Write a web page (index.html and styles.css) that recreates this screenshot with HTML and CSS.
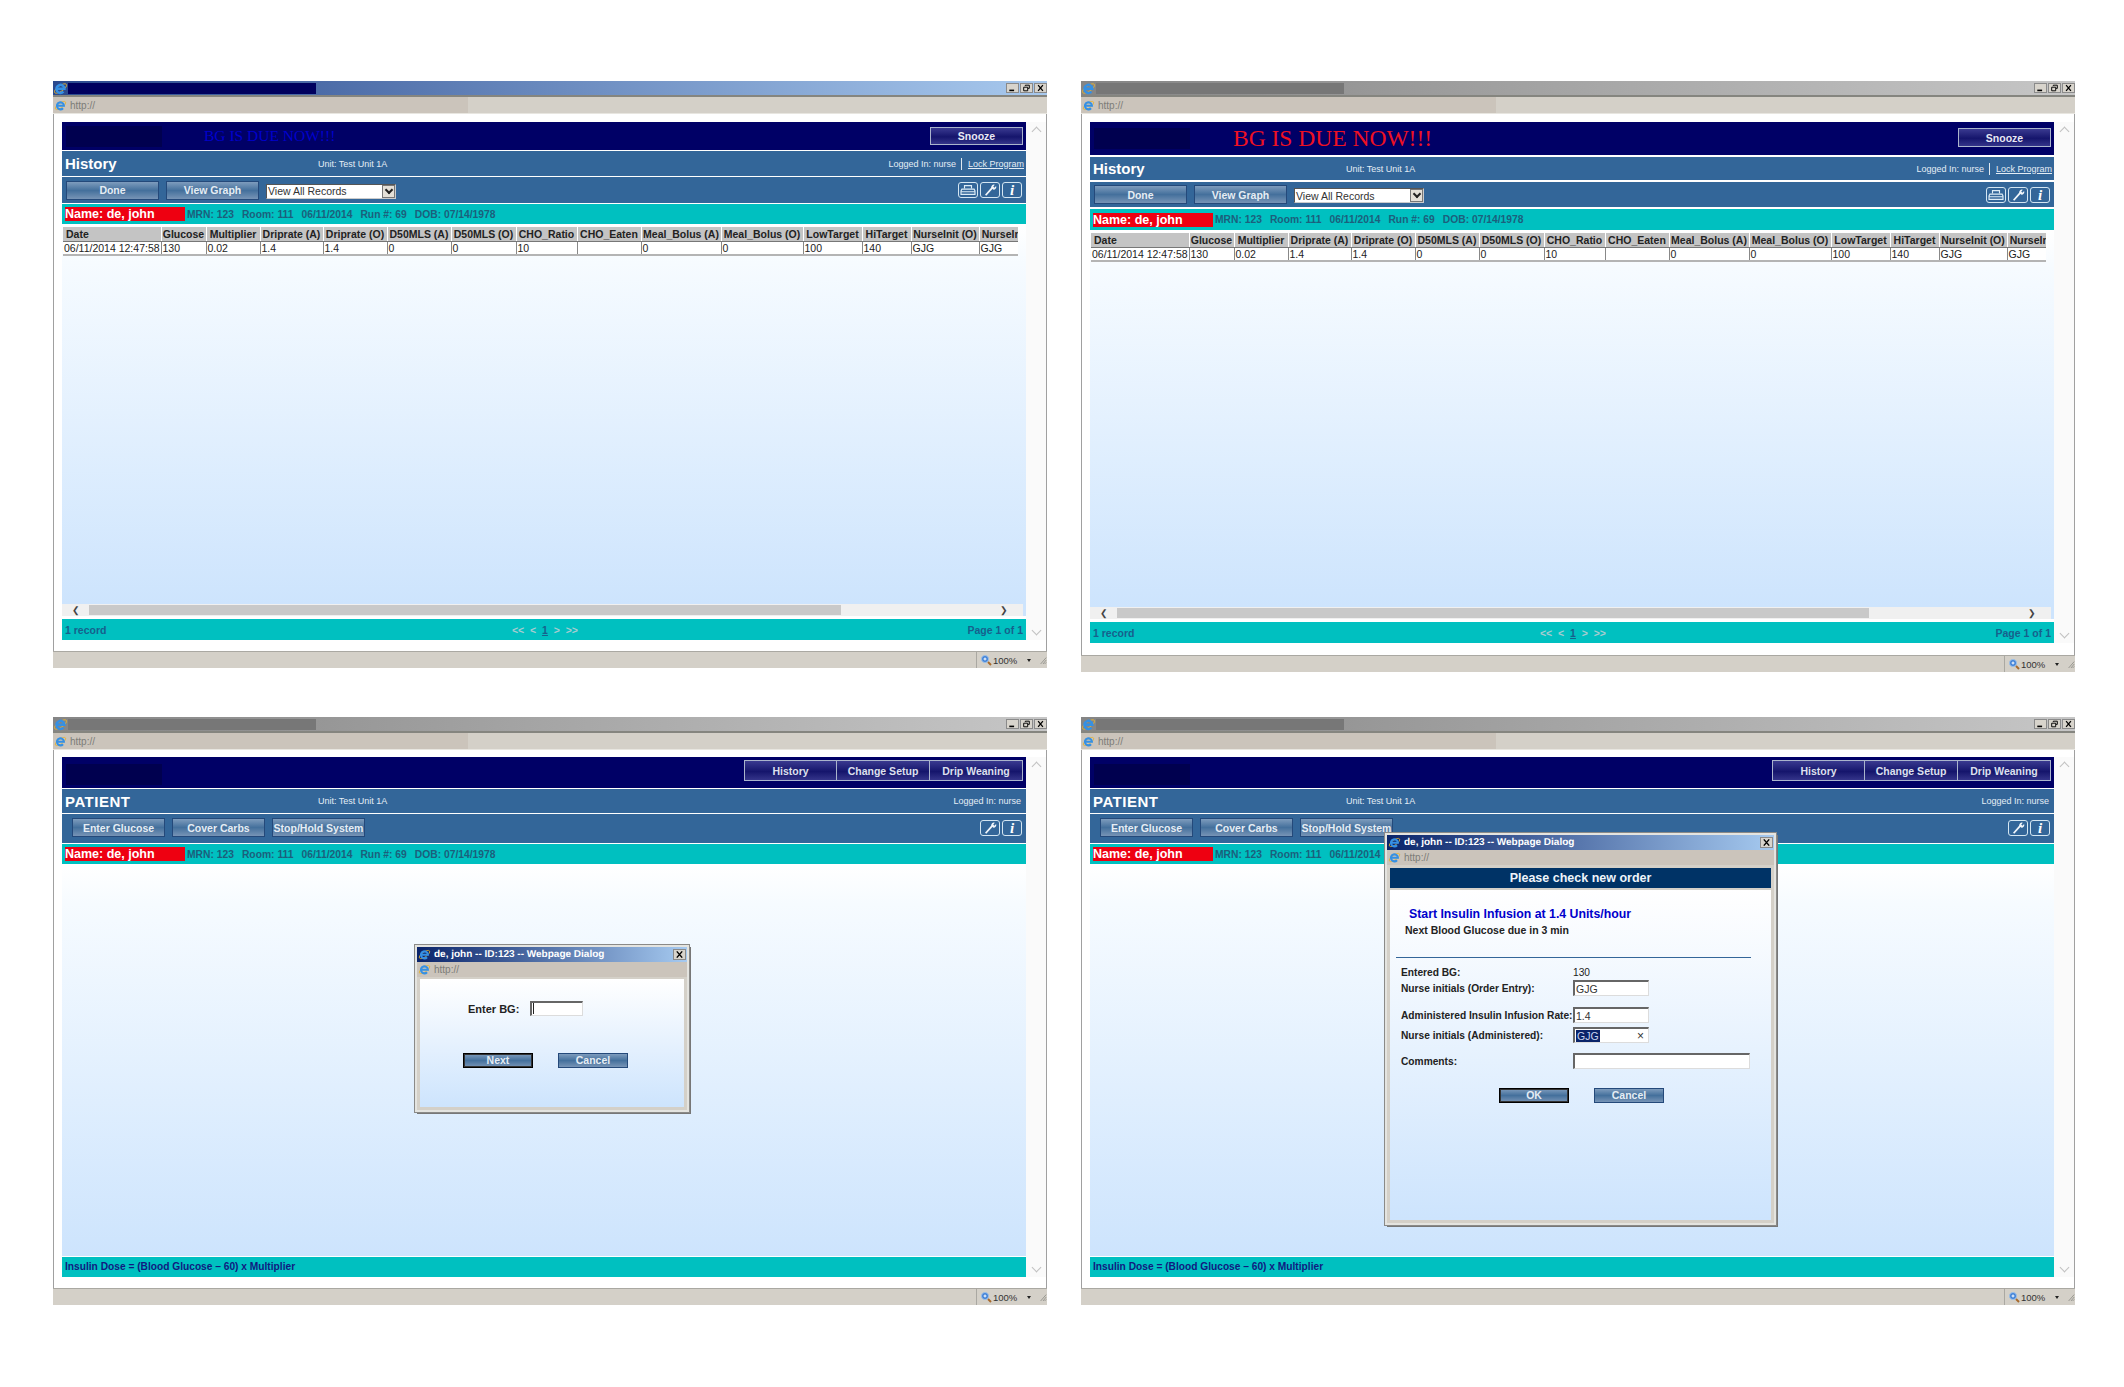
FILE: index.html
```html
<!DOCTYPE html>
<html>

<head>
    <title>Insulin Program - Screens</title>
    <link rel="stylesheet" href="styles.css">
</head>

<body>
    <svg class="icon-defs" width="0" height="0">
        <symbol id="ie" viewBox="0 0 16 16">
            <ellipse cx="8" cy="8" rx="7.6" ry="3" transform="rotate(-35 8 8)" fill="none" stroke="#e6b32e" stroke-width="0.9"/>
            <path d="M3.6 8.3h8.6a4.300 4.300 0 1 0-1.100 3" fill="none" stroke="#3590e4" stroke-width="2.6"/>
        </symbol>
        <symbol id="min" viewBox="0 0 12 10"><path d="M2 8h6" stroke="#000" stroke-width="2"/></symbol>
        <symbol id="restore" viewBox="0 0 12 10"><path d="M4.5 2.5v-1h5v4h-1.5M2.5 4h5v4.500h-5z" fill="none" stroke="#000" stroke-width="1.2"/></symbol>
        <symbol id="close" viewBox="0 0 12 10"><path d="M3 1.500l6 7M9 1.500l-6 7" stroke="#000" stroke-width="1.600"/></symbol>
        <symbol id="printer" viewBox="0 0 20 16"><path d="M6 6V3h8v3M3 7h14l1 2v4H2V9z M2 10h16" fill="none" stroke="#dcecf6" stroke-width="1.300"/></symbol>
        <symbol id="wrench" viewBox="0 0 20 16"><path d="M5 14L13 5" stroke="#f2f6fa" stroke-width="2"/><path d="M11.500 5.500a3 3 0 0 1 4-3.500l-1.800 2 1.300 1.300 2-1.800a3 3 0 0 1-3.500 4z" fill="#f2f6fa"/></symbol>
        <symbol id="magnifier" viewBox="0 0 12 12"><circle cx="5" cy="5" r="3.500" fill="#3d7fd6" stroke="#9cc0ea"/><path d="M5 3.500v3M3.500 5h3" stroke="#fff"/><path d="M8 8l3 3" stroke="#a86a2c" stroke-width="2"/></symbol>
        <symbol id="grip" viewBox="0 0 10 12"><path d="M9 3L2 11M9 6l-4 5M9 9l-2 2" stroke="#8a8a84"/></symbol>
    </svg>

    <div class="desktop">

        <!-- History, alert still small -->
        <div class="window win-a due-small">
            <div class="title-bar">
                <svg class="ie-big"><use href="#ie"/></svg>
                <div class="title-hidden"></div>
                <div class="controls">
                    <span><svg><use href="#min"/></svg></span>
                    <span><svg><use href="#restore"/></svg></span>
                    <span><svg><use href="#close"/></svg></span>
                </div>
            </div>
            <div class="address-bar">
                <svg class="ie-small"><use href="#ie"/></svg>
                <span class="address-text">http://</span>
            </div>
            <div class="viewport">
                <div class="page">
                    <div class="nav-bar">
                        <div class="logo-hidden"></div>
                        <div class="due-text">BG IS DUE NOW!!!</div>
                        <button class="btn-snooze">Snooze</button>
                    </div>
                    <div class="heading-bar">
                        <div class="page-name">History</div>
                        <div class="unit">Unit: Test Unit 1A</div>
                        <div class="login-info">Logged In: nurse<span class="divider"></span><a href="#">Lock Program</a></div>
                    </div>
                    <div class="tool-bar">
                        <button class="btn-blue">Done</button>
                        <button class="btn-blue">View Graph</button>
                        <div class="select-box">View All Records<span class="select-arrow"></span></div>
                        <div class="tool-icons">
                            <span><svg><use href="#printer"/></svg></span>
                            <span><svg><use href="#wrench"/></svg></span>
                            <span class="info-icon">i</span>
                        </div>
                    </div>
                    <div class="patient-bar">
                        <div class="patient-name">Name: de, john</div>
                        <div class="patient-info">MRN: 123<span>Room: 111</span><span>06/11/2014</span><span>Run #: 69</span><span>DOB: 07/14/1978</span></div>
                    </div>
                    <div class="page-main">
                        <div class="table-clip">
                            <table class="history-table">
                                <tr>
                                    <th class="c-date">Date</th><th class="c-45">Glucose</th><th class="c-54">Multiplier</th><th class="c-63">Driprate (A)</th><th class="c-64">Driprate (O)</th><th class="c-64">D50MLS (A)</th><th class="c-65">D50MLS (O)</th><th class="c-61">CHO_Ratio</th><th class="c-64">CHO_Eaten</th><th class="c-80">Meal_Bolus (A)</th><th class="c-82">Meal_Bolus (O)</th><th class="c-59">LowTarget</th><th class="c-49">HiTarget</th><th class="c-68">NurseInit (O)</th><th class="c-68">NurseInit (A)</th>
                                </tr>
                                <tr>
                                    <td>06/11/2014 12:47:58</td><td>130</td><td>0.02</td><td>1.4</td><td>1.4</td><td>0</td><td>0</td><td>10</td><td></td><td>0</td><td>0</td><td>100</td><td>140</td><td>GJG</td><td>GJG</td>
                                </tr>
                            </table>
                        </div>
                    </div>
                    <div class="h-scroll">
                        <span class="h-arrow">&#10094;</span>
                        <div class="h-thumb"></div>
                        <span class="h-arrow">&#10095;</span>
                    </div>
                    <div class="pager-bar">
                        <div>1 record</div>
                        <div class="pager-links">&lt;&lt; &nbsp;&lt; &nbsp;<u>1</u>&nbsp; &gt; &nbsp;&gt;&gt;</div>
                        <div class="pager-count">Page 1 of 1</div>
                    </div>
                </div>
                <div class="v-scroll"><span class="chev-up"></span><span class="chev-down"></span></div>
            </div>
            <div class="status-bar">
                <div class="zoom-box"><svg class="zoom-icon"><use href="#magnifier"/></svg>100%<span class="zoom-drop"></span></div>
                <svg class="grip"><use href="#grip"/></svg>
            </div>
        </div>

        <!-- History, alert large and red -->
        <div class="window win-b due-large inactive">
            <div class="title-bar">
                <svg class="ie-big"><use href="#ie"/></svg>
                <div class="title-hidden"></div>
                <div class="controls">
                    <span><svg><use href="#min"/></svg></span>
                    <span><svg><use href="#restore"/></svg></span>
                    <span><svg><use href="#close"/></svg></span>
                </div>
            </div>
            <div class="address-bar">
                <svg class="ie-small"><use href="#ie"/></svg>
                <span class="address-text">http://</span>
            </div>
            <div class="viewport">
                <div class="page">
                    <div class="nav-bar">
                        <div class="logo-hidden"></div>
                        <div class="due-text">BG IS DUE NOW!!!</div>
                        <button class="btn-snooze">Snooze</button>
                    </div>
                    <div class="heading-bar">
                        <div class="page-name">History</div>
                        <div class="unit">Unit: Test Unit 1A</div>
                        <div class="login-info">Logged In: nurse<span class="divider"></span><a href="#">Lock Program</a></div>
                    </div>
                    <div class="tool-bar">
                        <button class="btn-blue">Done</button>
                        <button class="btn-blue">View Graph</button>
                        <div class="select-box">View All Records<span class="select-arrow"></span></div>
                        <div class="tool-icons">
                            <span><svg><use href="#printer"/></svg></span>
                            <span><svg><use href="#wrench"/></svg></span>
                            <span class="info-icon">i</span>
                        </div>
                    </div>
                    <div class="patient-bar">
                        <div class="patient-name">Name: de, john</div>
                        <div class="patient-info">MRN: 123<span>Room: 111</span><span>06/11/2014</span><span>Run #: 69</span><span>DOB: 07/14/1978</span></div>
                    </div>
                    <div class="page-main">
                        <div class="table-clip">
                            <table class="history-table">
                                <tr>
                                    <th class="c-date">Date</th><th class="c-45">Glucose</th><th class="c-54">Multiplier</th><th class="c-63">Driprate (A)</th><th class="c-64">Driprate (O)</th><th class="c-64">D50MLS (A)</th><th class="c-65">D50MLS (O)</th><th class="c-61">CHO_Ratio</th><th class="c-64">CHO_Eaten</th><th class="c-80">Meal_Bolus (A)</th><th class="c-82">Meal_Bolus (O)</th><th class="c-59">LowTarget</th><th class="c-49">HiTarget</th><th class="c-68">NurseInit (O)</th><th class="c-68">NurseInit (A)</th>
                                </tr>
                                <tr>
                                    <td>06/11/2014 12:47:58</td><td>130</td><td>0.02</td><td>1.4</td><td>1.4</td><td>0</td><td>0</td><td>10</td><td></td><td>0</td><td>0</td><td>100</td><td>140</td><td>GJG</td><td>GJG</td>
                                </tr>
                            </table>
                        </div>
                    </div>
                    <div class="h-scroll">
                        <span class="h-arrow">&#10094;</span>
                        <div class="h-thumb"></div>
                        <span class="h-arrow">&#10095;</span>
                    </div>
                    <div class="pager-bar">
                        <div>1 record</div>
                        <div class="pager-links">&lt;&lt; &nbsp;&lt; &nbsp;<u>1</u>&nbsp; &gt; &nbsp;&gt;&gt;</div>
                        <div class="pager-count">Page 1 of 1</div>
                    </div>
                </div>
                <div class="v-scroll"><span class="chev-up"></span><span class="chev-down"></span></div>
            </div>
            <div class="status-bar">
                <div class="zoom-box"><svg class="zoom-icon"><use href="#magnifier"/></svg>100%<span class="zoom-drop"></span></div>
                <svg class="grip"><use href="#grip"/></svg>
            </div>
        </div>

        <!-- Patient screen, Enter BG dialog -->
        <div class="window win-c patient-screen inactive">
            <div class="title-bar">
                <svg class="ie-big"><use href="#ie"/></svg>
                <div class="title-hidden"></div>
                <div class="controls">
                    <span><svg><use href="#min"/></svg></span>
                    <span><svg><use href="#restore"/></svg></span>
                    <span><svg><use href="#close"/></svg></span>
                </div>
            </div>
            <div class="address-bar">
                <svg class="ie-small"><use href="#ie"/></svg>
                <span class="address-text">http://</span>
            </div>
            <div class="viewport">
                <div class="page">
                    <div class="nav-bar">
                        <div class="logo-hidden"></div>
                        <div class="nav-tabs">
                            <button class="btn-tab">History</button>
                            <button class="btn-tab">Change Setup</button>
                            <button class="btn-tab">Drip Weaning</button>
                        </div>
                    </div>
                    <div class="heading-bar">
                        <div class="page-name">PATIENT</div>
                        <div class="unit">Unit: Test Unit 1A</div>
                        <div class="login-info">Logged In: nurse</div>
                    </div>
                    <div class="tool-bar">
                        <button class="btn-blue">Enter Glucose</button>
                        <button class="btn-blue">Cover Carbs</button>
                        <button class="btn-blue">Stop/Hold System</button>
                        <div class="tool-icons">
                            <span><svg><use href="#wrench"/></svg></span>
                            <span class="info-icon">i</span>
                        </div>
                    </div>
                    <div class="patient-bar">
                        <div class="patient-name">Name: de, john</div>
                        <div class="patient-info">MRN: 123<span>Room: 111</span><span>06/11/2014</span><span>Run #: 69</span><span>DOB: 07/14/1978</span></div>
                    </div>
                    <div class="page-main"></div>
                    <div class="formula-bar">Insulin Dose = (Blood Glucose &ndash; 60) x Multiplier</div>
                </div>
                <div class="v-scroll"><span class="chev-up"></span><span class="chev-down"></span></div>
            </div>
            <div class="status-bar">
                <div class="zoom-box"><svg class="zoom-icon"><use href="#magnifier"/></svg>100%<span class="zoom-drop"></span></div>
                <svg class="grip"><use href="#grip"/></svg>
            </div>

            <div class="dialog dialog-bg">
                <div class="dialog-title">
                    <svg class="ie-small"><use href="#ie"/></svg>
                    <span class="dialog-name">de, john -- ID:123 -- Webpage Dialog</span>
                    <span class="dialog-close"><svg><use href="#close"/></svg></span>
                </div>
                <div class="dialog-address">
                    <svg class="ie-small"><use href="#ie"/></svg>
                    <span class="address-text">http://</span>
                </div>
                <div class="dialog-body">
                    <div class="bg-row">
                        <label>Enter BG:</label>
                        <div class="field bg-field"><span class="caret"></span></div>
                    </div>
                    <div class="dialog-buttons">
                        <button class="btn-dialog default">Next</button>
                        <button class="btn-dialog">Cancel</button>
                    </div>
                </div>
            </div>
        </div>

        <!-- Patient screen, new order dialog -->
        <div class="window win-d patient-screen inactive">
            <div class="title-bar">
                <svg class="ie-big"><use href="#ie"/></svg>
                <div class="title-hidden"></div>
                <div class="controls">
                    <span><svg><use href="#min"/></svg></span>
                    <span><svg><use href="#restore"/></svg></span>
                    <span><svg><use href="#close"/></svg></span>
                </div>
            </div>
            <div class="address-bar">
                <svg class="ie-small"><use href="#ie"/></svg>
                <span class="address-text">http://</span>
            </div>
            <div class="viewport">
                <div class="page">
                    <div class="nav-bar">
                        <div class="logo-hidden"></div>
                        <div class="nav-tabs">
                            <button class="btn-tab">History</button>
                            <button class="btn-tab">Change Setup</button>
                            <button class="btn-tab">Drip Weaning</button>
                        </div>
                    </div>
                    <div class="heading-bar">
                        <div class="page-name">PATIENT</div>
                        <div class="unit">Unit: Test Unit 1A</div>
                        <div class="login-info">Logged In: nurse</div>
                    </div>
                    <div class="tool-bar">
                        <button class="btn-blue">Enter Glucose</button>
                        <button class="btn-blue">Cover Carbs</button>
                        <button class="btn-blue">Stop/Hold System</button>
                        <div class="tool-icons">
                            <span><svg><use href="#wrench"/></svg></span>
                            <span class="info-icon">i</span>
                        </div>
                    </div>
                    <div class="patient-bar">
                        <div class="patient-name">Name: de, john</div>
                        <div class="patient-info">MRN: 123<span>Room: 111</span><span>06/11/2014</span><span>Run #: 69</span><span>DOB: 07/14/1978</span></div>
                    </div>
                    <div class="page-main"></div>
                    <div class="formula-bar">Insulin Dose = (Blood Glucose &ndash; 60) x Multiplier</div>
                </div>
                <div class="v-scroll"><span class="chev-up"></span><span class="chev-down"></span></div>
            </div>
            <div class="status-bar">
                <div class="zoom-box"><svg class="zoom-icon"><use href="#magnifier"/></svg>100%<span class="zoom-drop"></span></div>
                <svg class="grip"><use href="#grip"/></svg>
            </div>

            <div class="dialog dialog-order">
                <div class="dialog-title">
                    <svg class="ie-small"><use href="#ie"/></svg>
                    <span class="dialog-name">de, john -- ID:123 -- Webpage Dialog</span>
                    <span class="dialog-close"><svg><use href="#close"/></svg></span>
                </div>
                <div class="dialog-address">
                    <svg class="ie-small"><use href="#ie"/></svg>
                    <span class="address-text">http://</span>
                </div>
                <div class="order-header">Please check new order</div>
                <div class="dialog-body">
                    <div class="order-title">Start Insulin Infusion at 1.4 Units/hour</div>
                    <div class="order-next">Next Blood Glucose due in 3 min</div>
                    <hr class="order-line">
                    <div class="order-grid">
                        <label class="row-bg">Entered BG:</label>
                        <div class="row-bg">130</div>
                        <label class="row-initials">Nurse initials (Order Entry):</label>
                        <input class="field" value="GJG">
                        <label class="row-rate">Administered Insulin Infusion Rate:</label>
                        <input class="field" value="1.4">
                        <label class="row-admin">Nurse initials (Administered):</label>
                        <div class="field field-selected"><span class="selected-text">GJG</span><span class="clear-x">&times;</span></div>
                        <label class="row-comments">Comments:</label>
                        <input class="field field-wide">
                    </div>
                    <div class="dialog-buttons">
                        <button class="btn-dialog default">OK</button>
                        <button class="btn-dialog">Cancel</button>
                    </div>
                </div>
            </div>
        </div>

    </div>
</body>

</html>
```

FILE: styles.css
```css
body {
    margin: 0;
    background: white;
    font-family: "Liberation Sans", Arial, sans-serif;
    font-size: 10px;
    color: #222;
}

.icon-defs {
    position: absolute;
}

.desktop {
    display: grid;
    grid-template-columns: 994px 994px;
    grid-template-rows: 636px 588px;
    column-gap: 34px;
    align-items: start;
    padding: 81px 0 0 53px;
}

.window {
    position: relative;
    display: flex;
    flex-direction: column;
    background: white;
}

.win-a { height: 587px; }
.win-b { height: 591px; }
.win-c, .win-d { height: 588px; }

/* title + address */
.title-bar {
    display: flex;
    align-items: center;
    height: 14px;
    border-bottom: 2px solid #85857f;
    background: linear-gradient(to right, #2b4a8e, #a8c9ee);
}

.inactive .title-bar {
    background: linear-gradient(to right, #858585, #c6c6c6);
}

.ie-big {
    width: 15px;
    height: 15px;
    flex: none;
}

.title-hidden {
    width: 248px;
    height: 11px;
    background: #00005e;
}

.inactive .title-hidden {
    background: #777;
}

.controls {
    display: flex;
    gap: 1px;
    margin-left: auto;
}

.controls span {
    width: 13px;
    height: 10px;
    background: #d8d4cc;
    border: 1px solid #8a8a8a;
    box-sizing: border-box;
}

.controls svg, .dialog-close svg {
    display: block;
    width: 100%;
    height: 100%;
}

.address-bar {
    display: flex;
    align-items: center;
    height: 16px;
    background: linear-gradient(to right, #cbc4bb 415px, #d4d0c8 415px);
    border-bottom: 1px solid #e8e6e0;
}

.ie-small {
    width: 13px;
    height: 13px;
    flex: none;
    margin: 0 3px 0 1px;
}

.address-text {
    font-size: 10px;
    color: #7c7c78;
}

/* page inside the browser */
.viewport {
    flex: 1;
    display: flex;
    min-height: 0;
    padding: 8px 0 11px 8px;
    border-left: 1px solid #a0a0a0;
    border-right: 1px solid #a0a0a0;
}

.win-b .viewport { padding-bottom: 12px; }
.patient-screen .viewport { padding-top: 7px; }

.page {
    width: 964px;
    display: flex;
    flex-direction: column;
    gap: 1px;
    flex: none;
}

.nav-bar {
    display: flex;
    align-items: center;
    flex: none;
    background: #000066;
}

.win-a .nav-bar { height: 28px; }
.win-b .nav-bar { height: 33px; margin-bottom: 1px; }
.patient-screen .nav-bar { height: 31px; }

.logo-hidden {
    width: 96px;
    height: 21px;
    margin-left: 4px;
    background: #00004f;
    flex: none;
}

.patient-screen .logo-hidden {
    margin-top: 4px;
}

.due-text {
    font-family: "Liberation Serif", "Times New Roman", serif;
    margin-left: 42px;
    white-space: nowrap;
}

.win-a .due-text {
    font-size: 15.5px;
    color: #0000cc;
}

.win-b .due-text {
    font-size: 23.5px;
    color: #ee1122;
    margin-left: 43px;
}

.btn-snooze {
    width: 93px;
    height: 18px;
    margin: 5px 3px auto auto;
    padding: 0;
    border: 1px solid #aab4cc;
    background: linear-gradient(#3a3a90, #15156c 55%, #34348a);
    color: #e8e8f4;
    font: bold 10.5px "Liberation Sans", Arial, sans-serif;
}

.win-b .btn-snooze {
    height: 19px;
    margin-top: 6px;
}

.nav-tabs {
    display: flex;
    margin: 3px 3px auto auto;
}

.btn-tab {
    width: 93px;
    height: 21px;
    padding: 0;
    border: 1px solid #aab4cc;
    border-left-width: 0;
    background: linear-gradient(#3a3a90, #15156c 55%, #34348a);
    color: #dde0ee;
    font: bold 10.5px "Liberation Sans", Arial, sans-serif;
}

.btn-tab:first-child {
    border-left-width: 1px;
}

.heading-bar {
    position: relative;
    display: flex;
    align-items: center;
    flex: none;
    padding: 0 2px 0 3px;
    background: #336699;
    color: #e4edf5;
}

.win-a .heading-bar { height: 25px; }
.win-b .heading-bar { height: 23px; margin-bottom: 1px; }
.patient-screen .heading-bar { height: 24px; padding-right: 5px; }

.page-name {
    width: 253px;
    font-size: 15px;
    font-weight: bold;
    color: white;
}

.patient-screen .page-name {
    letter-spacing: 0.5px;
}

.unit {
    font-size: 9px;
}

.login-info {
    display: flex;
    align-items: center;
    margin-left: auto;
    font-size: 9px;
}

.login-info a {
    color: #e4edf5;
}

.divider {
    width: 1px;
    height: 12px;
    margin: 0 6px 0 5px;
    background: #dfe8f0;
}

.tool-bar {
    display: flex;
    align-items: center;
    gap: 7px;
    flex: none;
    padding: 0 4px 0 4px;
    background: #336699;
}

.win-a .tool-bar { height: 26px; }
.win-b .tool-bar { height: 25px; margin-bottom: 1px; }
.patient-screen .tool-bar { height: 27px; padding: 0 4px 2px 10px; }

.btn-blue {
    width: 93px;
    height: 19px;
    padding: 0;
    border: 1px solid #24497a;
    background: linear-gradient(#7e9cbd, #44709c 50%, #7794b6);
    color: #e6edf4;
    font: bold 10.5px "Liberation Sans", Arial, sans-serif;
}

.select-box {
    display: flex;
    align-items: center;
    width: 130px;
    height: 15px;
    margin-top: 2px;
    padding-left: 1px;
    box-sizing: border-box;
    background: white;
    border: 1px solid #555;
    border-right-color: #ccc;
    border-bottom-color: #ccc;
    color: #333;
    font-size: 10.5px;
}

.select-arrow {
    position: relative;
    width: 13px;
    height: 13px;
    margin-left: auto;
    box-sizing: border-box;
    border: 1px solid #777;
    background: #e4e0d8;
}

.select-arrow::after {
    content: "";
    position: absolute;
    left: 3px;
    top: 1px;
    width: 4px;
    height: 4px;
    border-right: 2px solid #222;
    border-bottom: 2px solid #222;
    transform: rotate(45deg);
}

.tool-icons {
    display: flex;
    gap: 2px;
    margin-left: auto;
}

.tool-icons span {
    width: 20px;
    height: 16px;
    box-sizing: border-box;
    border: 1px solid #d4e6f2;
    border-radius: 3px;
    overflow: hidden;
}

.tool-icons svg {
    display: block;
    width: 18px;
    height: 14px;
}

.tool-icons .info-icon {
    color: white;
    font: italic bold 15px/14px "Liberation Serif", serif;
    text-align: center;
}

.patient-bar {
    display: flex;
    align-items: center;
    flex: none;
    padding-left: 3px;
    background: #00c0c0;
    height: 20px;
}

.win-b .patient-bar {
    height: 21px;
}

.patient-name {
    width: 120px;
    height: 14px;
    flex: none;
    background: #ee0011;
    color: white;
    font: bold 12.5px/14px "Liberation Sans", Arial, sans-serif;
}

.patient-info {
    margin-left: 2px;
    color: #1c5f7c;
    font-size: 10.3px;
    font-weight: bold;
    white-space: nowrap;
}

.patient-info span {
    margin-left: 8px;
}

.page-main {
    flex: 1;
    min-height: 0;
    padding: 2px 8px 0 1px;
    background: linear-gradient(white, #f6fbff 10%, #cde4fd);
}

/* table, last column runs past the clip */
.table-clip {
    width: 955px;
    overflow: hidden;
}

.history-table {
    table-layout: fixed;
    width: 984px;
    border-collapse: collapse;
    font-size: 10.5px;
}

.history-table th {
    box-sizing: border-box;
    height: 14px;
    padding: 0 1px;
    background: #c4c4c4;
    border-left: 1px solid white;
    border-bottom: 1px solid #777;
    font-weight: bold;
    text-align: center;
    white-space: nowrap;
    overflow: hidden;
}

.history-table th.c-date {
    text-align: left;
    padding-left: 3px;
    border-left: none;
}

.history-table td {
    height: 12px;
    padding: 0 1px;
    background: white;
    border-left: 1px solid #888;
    border-bottom: 2px solid #b4b4b4;
    white-space: nowrap;
    overflow: hidden;
}

.history-table td:first-child {
    border-left: none;
}

.c-date { width: 98px; }
.c-45 { width: 45px; }
.c-49 { width: 49px; }
.c-54 { width: 54px; }
.c-59 { width: 59px; }
.c-61 { width: 61px; }
.c-63 { width: 63px; }
.c-64 { width: 64px; }
.c-65 { width: 65px; }
.c-68 { width: 68px; }
.c-80 { width: 80px; }
.c-82 { width: 82px; }

.h-scroll {
    display: flex;
    align-items: center;
    height: 12px;
    flex: none;
    margin-top: -1px;
    margin-right: 3px;
    background: #f0f0f0;
    box-shadow: 3px 0 0 #cde4fd;
}

.h-arrow {
    width: 27px;
    flex: none;
    color: #444;
    font-size: 9px;
    text-align: center;
}

.h-thumb {
    width: 752px;
    height: 10px;
    background: #c9c9c9;
}

.h-thumb + .h-arrow {
    margin-left: auto;
    width: 38px;
}

.pager-bar {
    display: flex;
    align-items: center;
    justify-content: space-between;
    flex: none;
    height: 21px;
    margin-top: 2px;
    padding: 0 3px;
    background: #00c0c0;
    color: #17608c;
    font-size: 10.5px;
    font-weight: bold;
}

.pager-links {
    margin-left: 16px;
    color: #a8ccd0;
}

.pager-links u {
    color: #17608c;
}

.formula-bar {
    flex: none;
    height: 20px;
    padding-left: 3px;
    background: #00c0c0;
    color: #101a80;
    font-size: 10.2px;
    font-weight: bold;
    line-height: 20px;
}

.v-scroll {
    flex: 1;
    display: flex;
    flex-direction: column;
    justify-content: space-between;
    align-items: center;
    padding: 6px 0 6px;
    background: #fafafa;
}

.chev-up, .chev-down {
    width: 6px;
    height: 6px;
    border-left: 1.5px solid #c0c0c0;
    border-top: 1.5px solid #c0c0c0;
    transform: rotate(45deg);
}

.chev-down {
    transform: rotate(225deg);
}

.status-bar {
    display: flex;
    align-items: center;
    justify-content: flex-end;
    height: 16px;
    flex: none;
    background: #d4d0c8;
    border-top: 1px solid #aaa8a2;
}

.zoom-box {
    display: flex;
    align-items: center;
    align-self: stretch;
    width: 62px;
    border-left: 1px solid #aaa8a2;
    color: #333;
    font-size: 9.5px;
}

.zoom-icon {
    width: 12px;
    height: 12px;
    margin: 0 1px 0 3px;
}

.zoom-drop {
    width: 0;
    height: 0;
    margin-left: 10px;
    border: 2.5px solid transparent;
    border-top: 3px solid #222;
    border-bottom: 0;
}

.grip {
    width: 8px;
    height: 12px;
}

/* popup dialogs sit over the page */
.dialog {
    position: absolute;
    display: flex;
    flex-direction: column;
    box-sizing: border-box;
    background: #d4d0c8;
    border: 2px solid #e4e4e0;
    outline: 1px solid #8a8a88;
    box-shadow: 2px 2px 0 #777;
}

.dialog-bg {
    left: 362px;
    top: 228px;
    width: 274px;
    height: 167px;
}

.dialog-order {
    left: 304px;
    top: 116px;
    width: 391px;
    height: 392px;
}

.dialog-title {
    display: flex;
    align-items: center;
    flex: none;
    height: 15px;
    background: linear-gradient(to right, #0a246a, #a6caf0);
}

.dialog-name {
    color: white;
    font-size: 10px;
    font-weight: bold;
    text-rendering: geometricPrecision;
}

.dialog-close {
    width: 13px;
    height: 11px;
    margin-left: auto;
    margin-right: 1px;
    box-sizing: border-box;
    background: #d8d4cc;
    border: 1px solid #8a8a8a;
}

.dialog-address {
    display: flex;
    align-items: center;
    flex: none;
    height: 15px;
    background: #cbc4bb;
}

.dialog-body {
    flex: 1;
    display: flex;
    flex-direction: column;
    margin: 2px 3px 3px;
    background: linear-gradient(white, #cde4fd);
}

.bg-row {
    display: flex;
    align-items: center;
    margin: 22px 0 0 48px;
}

.bg-row label {
    width: 62px;
    font-size: 11px;
    font-weight: bold;
}

.field {
    display: block;
    width: 76px;
    height: 16px;
    margin: 0;
    padding: 0 1px;
    box-sizing: border-box;
    border: 1px solid #dcdcdc;
    border-top: 2px solid #666;
    border-left: 2px solid #666;
    background: white;
    color: #333;
    font: 10.5px "Liberation Sans", Arial, sans-serif;
}

.bg-field {
    width: 53px;
    height: 15px;
}

.caret {
    display: block;
    width: 1px;
    height: 11px;
    background: #222;
}

.dialog-buttons {
    display: flex;
    gap: 25px;
}

.dialog-bg .dialog-buttons {
    margin: 37px 0 0 43px;
}

.dialog-order .dialog-buttons {
    margin: 19px 0 0 109px;
}

.btn-dialog {
    width: 70px;
    height: 15px;
    padding: 0 0 3px;
    border: 1px solid #24497a;
    background: linear-gradient(#7e9cbd, #44709c 50%, #7794b6);
    color: #e6edf4;
    font: bold 10.5px "Liberation Sans", Arial, sans-serif;
}

.btn-dialog.default {
    border: 1px solid black;
    outline: 1px solid #333;
    outline-offset: -2px;
}

.order-header {
    flex: none;
    height: 20px;
    margin: 3px 3px 0;
    background: #003366;
    color: #eef4fa;
    font-size: 12.5px;
    font-weight: bold;
    line-height: 20px;
    text-align: center;
}

.order-title {
    margin: 17px 0 0 19px;
    color: #0000cc;
    font-size: 12.3px;
    font-weight: bold;
}

.order-next {
    margin: 3px 0 0 15px;
    font-size: 10.5px;
    font-weight: bold;
}

.order-line {
    width: 355px;
    height: 1px;
    margin: 21px 0 0 6px;
    border: none;
    background: #336699;
}

.order-grid {
    display: grid;
    grid-template-columns: 172px auto;
    justify-content: start;
    align-items: center;
    margin: 7px 0 0 11px;
    font-size: 10.2px;
}

.order-grid label {
    font-weight: bold;
    white-space: nowrap;
}

.row-bg { height: 15px; line-height: 15px; }
.order-grid input:nth-of-type(2) { margin-top: 11px; }
.order-grid .row-rate { margin-top: 11px; }
.order-grid .field-selected { margin-top: 4px; }
.order-grid .row-admin { margin-top: 4px; }
.order-grid .field-wide { margin-top: 10px; }
.order-grid .row-comments { margin-top: 10px; }

.field-selected {
    display: flex;
    align-items: center;
}

.selected-text {
    background: #0a246a;
    color: #c8d4f0;
    padding: 0 1px;
}

.clear-x {
    margin-left: auto;
    margin-right: 3px;
    font-size: 12px;
}

.field-wide {
    width: 177px;
}
```
